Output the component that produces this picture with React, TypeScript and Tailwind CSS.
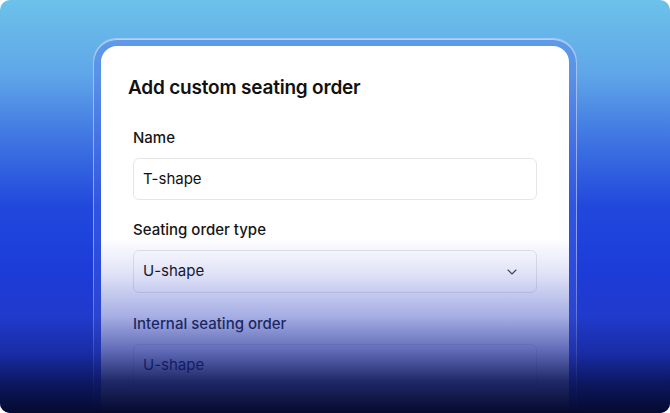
import React from 'react';
import { ChevronDown } from 'lucide-react';

export default function App() {
  return (
    <div className="relative w-[670px] h-[413px] overflow-hidden rounded-[10px] bg-[linear-gradient(180deg,#6cc2ea_0%,#5fa6e8_18%,#3f74e2_34%,#2148dc_50%,#1b3cda_66%,#1835cc_100%)] font-['Inter',sans-serif]">
      <div className="pt-[38px] pl-[93px]">
        <div className="w-[484px] rounded-[24px] p-[7px] bg-[rgba(80,110,230,0.35)] border border-white/45 shadow-[inset_0_1px_0_rgba(255,255,255,0.55)]">
          <div className="bg-white rounded-[16px] pt-[30px] px-[32px] pb-[40px]">
            <h1 className="-ml-[5px] text-[19px] leading-[24px] font-semibold text-[#111] tracking-[-0.2px]">
              Add custom seating order
            </h1>

            <div className="mt-[28px] flex flex-col">
              <label className="text-[15px] leading-[20px] font-medium text-[#161616]">Name</label>
              <div className="mt-[10px] h-[42px] rounded-[6px] border border-[#e4e6ea] flex items-center px-[9px] text-[15px] text-[#111]">
                T-shape
              </div>

              <label className="mt-[20px] text-[15px] leading-[20px] font-medium text-[#161616]">Seating order type</label>
              <div className="mt-[10px] h-[43px] rounded-[6px] border border-[#e4e6ea] flex items-center justify-between px-[9px] text-[15px] text-[#111]">
                <span>U-shape</span>
                <ChevronDown className="w-[16px] h-[16px] text-[#444] mr-[7px]" strokeWidth={1.6} />
              </div>

              <label className="mt-[21px] text-[15px] leading-[20px] font-medium text-[#161616]">Internal seating order</label>
              <div className="mt-[10px] h-[43px] rounded-[6px] border border-[#e4e6ea] flex items-center px-[9px] text-[15px] text-[#111]">
                U-shape
              </div>
            </div>
          </div>
        </div>
      </div>

      {/* bottom fade */}
      <div className="absolute left-0 right-0 bottom-0 h-[175px] bg-[linear-gradient(180deg,rgba(40,60,200,0)_0%,rgba(40,60,200,0.14)_20%,rgba(40,60,190,0.42)_45%,rgba(25,40,150,0.7)_65%,rgba(12,22,90,0.92)_82%,#050a2e_100%)]" />
    </div>
  );
}
